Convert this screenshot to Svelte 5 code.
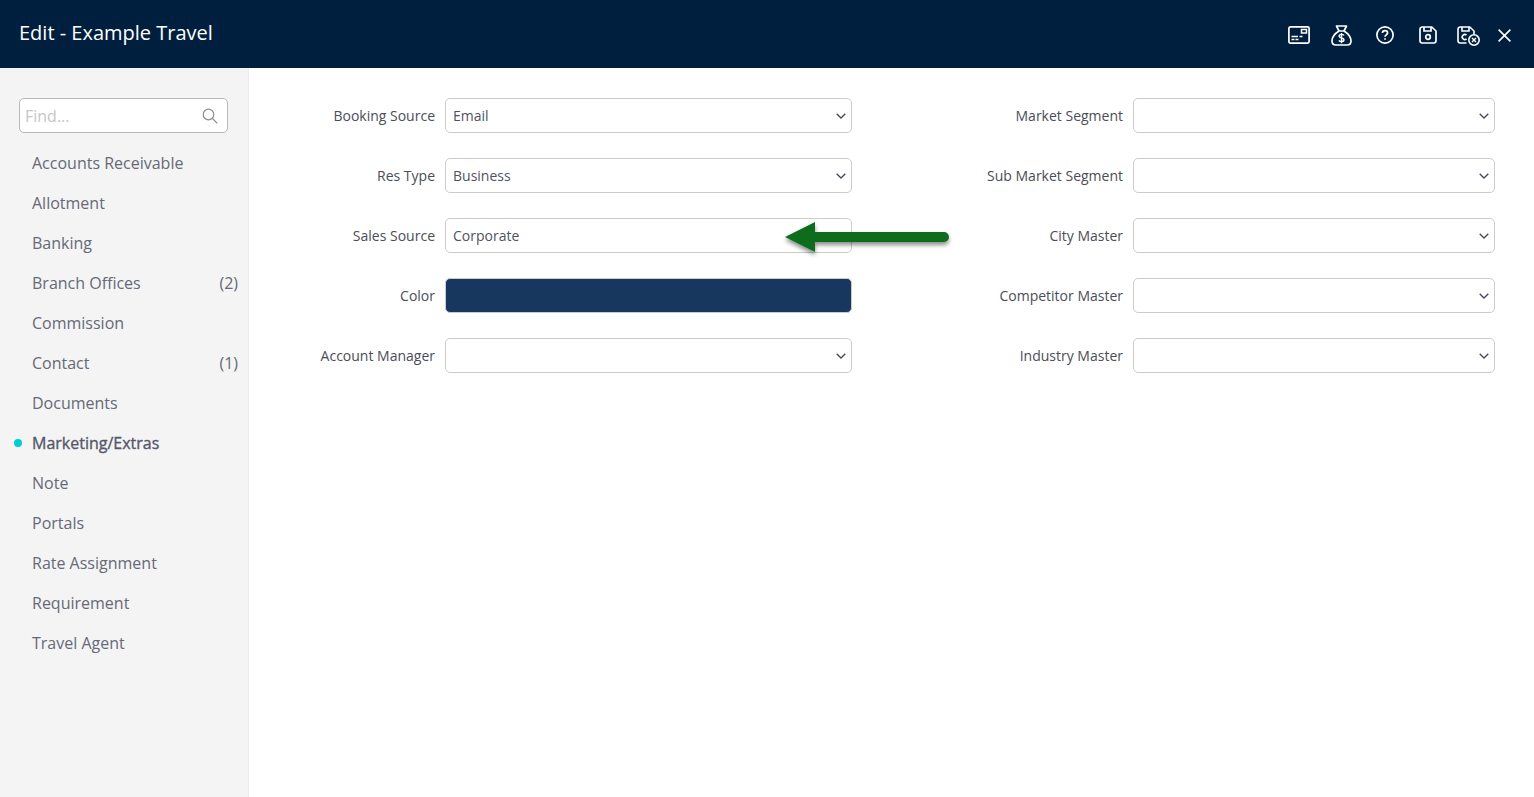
<script>
  const navItems = [
    { name: 'Accounts Receivable' },
    { name: 'Allotment' },
    { name: 'Banking' },
    { name: 'Branch Offices', count: 2 },
    { name: 'Commission' },
    { name: 'Contact', count: 1 },
    { name: 'Documents' },
    { name: 'Marketing/Extras', active: true },
    { name: 'Note' },
    { name: 'Portals' },
    { name: 'Rate Assignment' },
    { name: 'Requirement' },
    { name: 'Travel Agent' }
  ];

  const leftFields = [
    { label: 'Booking Source', value: 'Email' },
    { label: 'Res Type', value: 'Business' },
    { label: 'Sales Source', value: 'Corporate' },
    { label: 'Color', color: true },
    { label: 'Account Manager', value: '' }
  ];

  const rightFields = ['Market Segment', 'Sub Market Segment', 'City Master', 'Competitor Master', 'Industry Master'];
</script>

{#snippet chevron()}
  <svg class="chevron" width="10" height="6" viewBox="0 0 10 6" fill="none" stroke="#44495a" stroke-width="1.3">
    <path d="M0.7 0.7 5 5 9.3 0.7" />
  </svg>
{/snippet}

<div class="page">
  <header class="topbar">
    <h1>Edit - Example Travel</h1>
    <div class="actions">
      <svg class="i-card" width="22" height="18" viewBox="0 0 22 18" fill="none" stroke="#fff" stroke-width="1.700">
        <rect x="0.900" y="0.900" width="20.200" height="16.200" rx="1.500" />
        <rect x="13.500" y="3.500" width="5" height="3.500" stroke-width="1.500" />
        <path d="M3.500 10.500h6.500M3.500 13.500h3M7.500 13.500h3M11.500 10.500h3" stroke-width="1.400" />
      </svg>
      <svg class="i-bag" width="21" height="21" viewBox="0 0 21 21" fill="none" stroke="#fff" stroke-width="1.700">
        <path d="M5.500 1h10l-2.500 5H8z" stroke-linejoin="round" />
        <path d="M8 6C4 8.500 1 12.500 1 16c0 2.500 1.500 4 4 4h11c2.500 0 4-1.500 4-4 0-3.500-3-7.500-7-10" />
        <path d="M13 10.500c-.4-.7-1.200-1.100-2.500-1.100-1.400 0-2.400.7-2.400 1.800 0 2.400 4.900 1.100 4.900 3.500 0 1.100-1.100 1.800-2.500 1.800-1.300 0-2.100-.4-2.600-1.200M10.500 8v10.200" stroke-width="1.400" />
      </svg>
      <svg class="i-help" width="18" height="18" viewBox="0 0 18 18" fill="none" stroke="#fff" stroke-width="1.700">
        <circle cx="9" cy="9" r="8.100" />
        <path d="M6.400 7C6.500 5.500 7.600 4.600 9 4.600c1.500 0 2.600.9 2.600 2.200 0 2-2.600 2-2.600 4" />
        <path d="M9 12.200v1.500" />
      </svg>
      <svg class="i-save" width="18" height="18" viewBox="0 0 18 18" fill="none" stroke="#fff" stroke-width="1.700">
        <path d="M3.200 1h9.600L17 5v9.800a2.200 2.200 0 0 1-2.200 2.200H3.200A2.200 2.200 0 0 1 1 14.800V3.200A2.200 2.200 0 0 1 3.200 1z" />
        <path d="M5 1v4h7V1" />
        <circle cx="9" cy="11" r="2.300" />
      </svg>
      <svg class="i-discard" width="23" height="20" viewBox="0 0 23 20" fill="none" stroke="#fff" stroke-width="1.600">
        <path d="M9.500 17H3.200A2.200 2.200 0 0 1 1 14.800V3.200A2.200 2.200 0 0 1 3.200 1h9.600L17 5v3" />
        <path d="M5 1v4h7V1" />
        <path d="M9.500 9.200a2.500 2.500 0 1 0 0 3.600" />
        <circle cx="17" cy="14" r="5.200" />
        <path d="M15 12l4 4M19 12l-4 4" stroke-width="1.400" />
      </svg>
      <svg class="i-close" width="13" height="13" viewBox="0 0 13 13" fill="none" stroke="#fff" stroke-width="1.600">
        <path d="M.6.6l11.800 11.800M12.400.6.600 12.400" />
      </svg>
    </div>
  </header>

  <div class="body">
    <aside class="sidebar">
      <div class="search">
        <span class="placeholder">Find...</span>
        <svg width="16" height="16" viewBox="0 0 16 16" fill="none" stroke="#8a8d96" stroke-width="1.200">
          <circle cx="6.500" cy="6.500" r="5.300" />
          <path d="M10.500 10.500l4.800 4.800" />
        </svg>
      </div>
      <nav>
        {#each navItems as item}
          <div class="nav-item" class:active={item.active}>
            <span>{item.name}</span>
            {#if item.count}<span class="count">({item.count})</span>{/if}
          </div>
        {/each}
      </nav>
    </aside>

    <main class="form">
      <div class="column left">
        {#each leftFields as field}
          <div class="row">
            <span class="label">{field.label}</span>
            {#if field.color}
              <div class="swatch"></div>
            {:else}
              <div class="select">
                <span>{field.value}</span>
                {@render chevron()}
              </div>
            {/if}
          </div>
        {/each}
        <svg class="arrow" width="176" height="44" viewBox="0 0 176 44">
          <defs>
            <filter id="arrow-shadow" x="-10%" y="-30%" width="120%" height="170%">
              <feDropShadow dx="0" dy="3" stdDeviation="2" flood-color="#000" flood-opacity="0.45" />
            </filter>
          </defs>
          <path d="M2 19 32 4v10h129a5 5 0 0 1 0 10H32v10z" fill="#116d1a" filter="url(#arrow-shadow)" />
        </svg>
      </div>
      <div class="column right">
        {#each rightFields as label}
          <div class="row">
            <span class="label">{label}</span>
            <div class="select">
              <span></span>
              {@render chevron()}
            </div>
          </div>
        {/each}
      </div>
    </main>
  </div>
</div>

<style>
  :global(body) {
    margin: 0;
    background: #fff;
    font-family: 'Open Sans', 'Liberation Sans', sans-serif;
  }

  .page {
    display: flex;
    flex-direction: column;
    height: 797px;
    overflow: hidden;
  }

  .topbar {
    display: flex;
    align-items: center;
    justify-content: space-between;
    height: 68px;
    padding: 0 23px 0 19px;
    background: #001f3f;
    color: #fff;
    flex-shrink: 0;
  }

  .topbar h1 {
    margin: 0 0 4px;
    font-size: 20px;
    font-weight: 400;
  }

  .actions {
    display: flex;
    align-items: center;
    margin-top: 2px;
  }

  .i-card { margin-right: 21px; }
  .i-bag { margin-right: 24px; }
  .i-help { margin-right: 25px; }
  .i-save { margin-right: 20px; }
  .i-discard { margin-right: 18px; margin-top: 2px; }

  .body {
    display: flex;
    flex: 1;
  }

  .sidebar {
    width: 249px;
    padding: 30px 10px 0 19px;
    box-sizing: border-box;
    background: #f4f4f4;
    border-right: 1px solid #ececec;
    flex-shrink: 0;
  }

  .search {
    display: flex;
    align-items: center;
    justify-content: space-between;
    width: 209px;
    height: 35px;
    padding: 0 9px 0 5px;
    box-sizing: border-box;
    background: #fff;
    border: 1px solid #b8b8b8;
    border-radius: 5px;
  }

  .placeholder {
    font-size: 16px;
    color: #c4c6ca;
  }

  nav {
    margin-top: 10px;
  }

  .nav-item {
    position: relative;
    display: flex;
    justify-content: space-between;
    align-items: center;
    height: 40px;
    padding-left: 13px;
    font-size: 16px;
    color: #666977;
  }

  .nav-item.active {
    color: #555869;
    -webkit-text-stroke: 0.35px #555869;
  }

  .nav-item.active::before {
    content: '';
    position: absolute;
    left: -5px;
    top: 16px;
    width: 8px;
    height: 8px;
    border-radius: 50%;
    background: #00ccd6;
  }

  .form {
    display: flex;
    flex: 1;
    padding-top: 30px;
  }

  .column {
    position: relative;
    display: flex;
    flex-direction: column;
    gap: 25px;
  }

  .left {
    width: 603px;
  }

  .right {
    width: 643px;
  }

  .row {
    display: flex;
    align-items: center;
    justify-content: flex-end;
    gap: 10px;
    height: 35px;
  }

  .label {
    font-size: 14px;
    color: #4a4d57;
    white-space: nowrap;
  }

  .select {
    display: flex;
    align-items: center;
    justify-content: space-between;
    height: 35px;
    padding: 0 5px 0 7px;
    box-sizing: border-box;
    background: #fff;
    border: 1px solid #ccc;
    border-radius: 5px;
    font-size: 14px;
    color: #50535f;
  }

  .left .select,
  .swatch {
    width: 407px;
  }

  .right .select {
    width: 362px;
  }

  .swatch {
    height: 35px;
    box-sizing: border-box;
    background: #17375e;
    border: 1px solid #ccc;
    border-radius: 5px;
  }

  .arrow {
    position: absolute;
    left: 534px;
    top: 120px;
  }
</style>
